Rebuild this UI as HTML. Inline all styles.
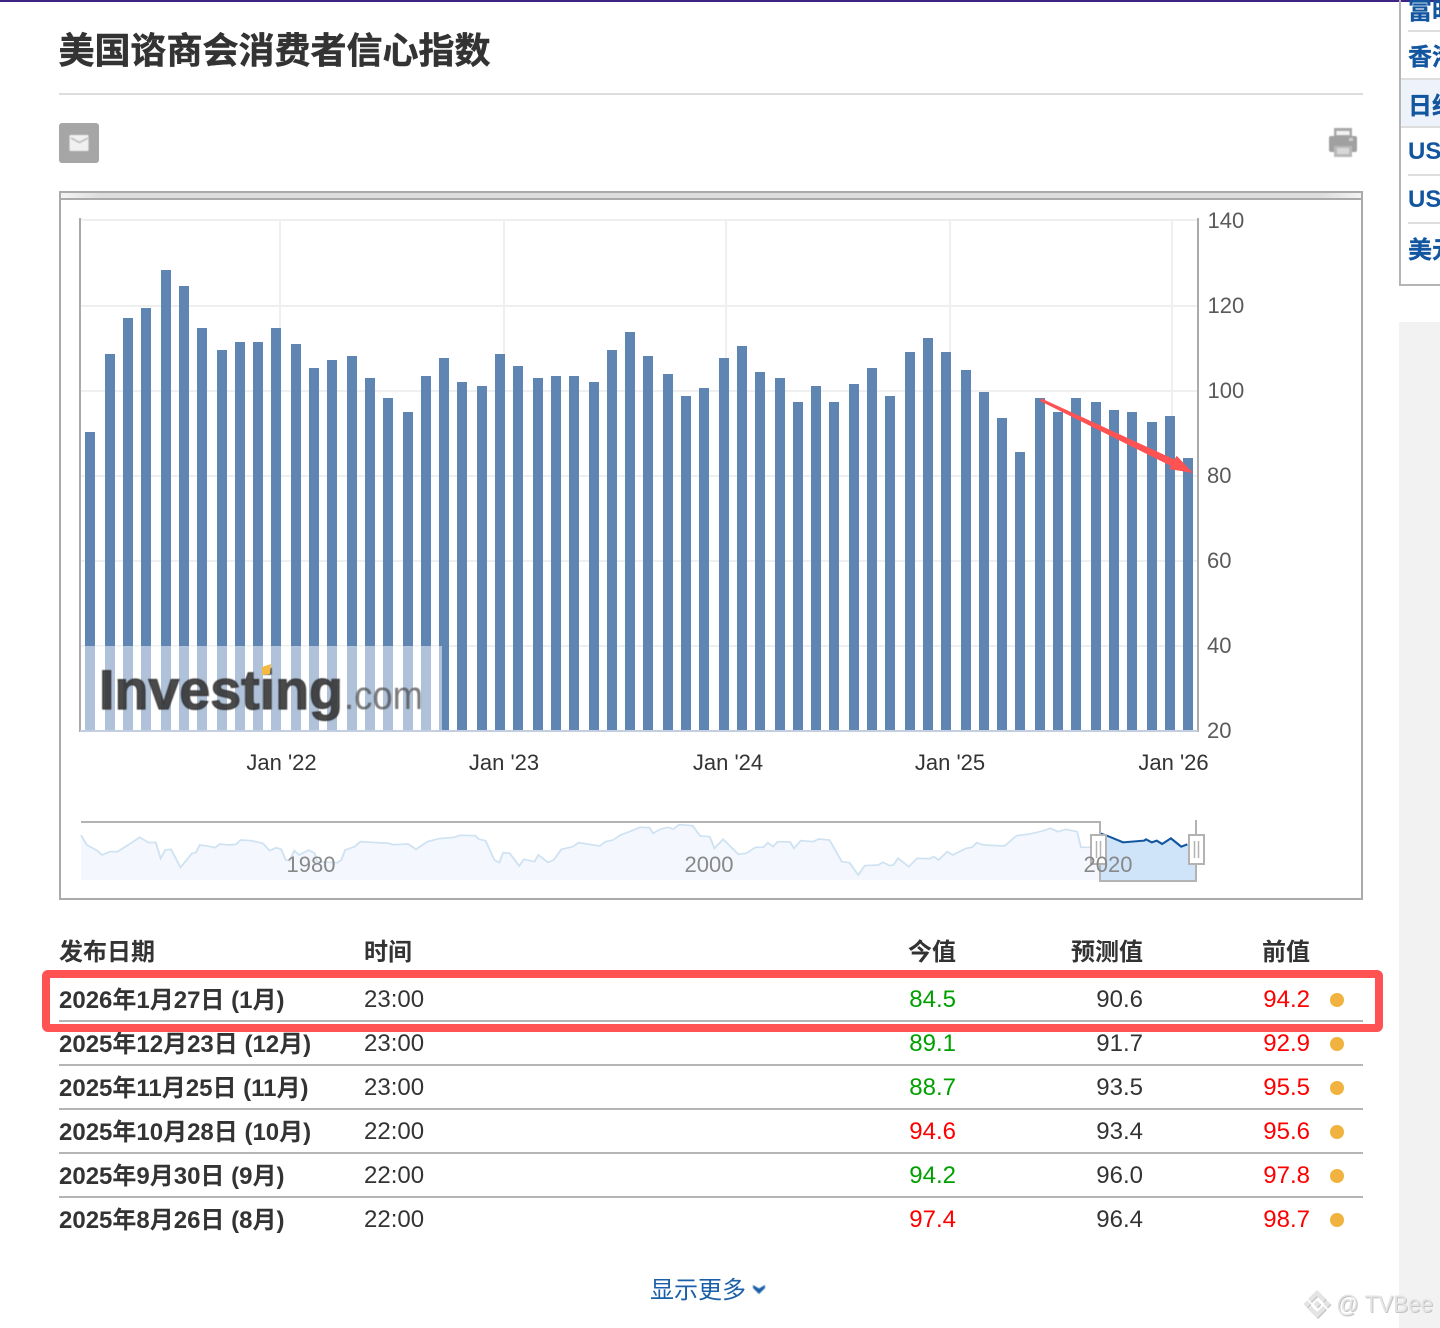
<!DOCTYPE html>
<html lang="zh">
<head>
<meta charset="utf-8">
<title>美国谘商会消费者信心指数</title>
<style>
html,body{margin:0;padding:0;background:#fff;width:1440px;height:1328px;overflow:hidden}
svg{display:block}
text{font-family:"Liberation Sans","Noto Sans CJK SC",sans-serif}
.b{font-weight:700;fill:#333;font-size:24px}
.n{fill:#333;font-size:24px}
.g{fill:#00a000;font-size:24px;text-anchor:end}
.r{fill:#f00;font-size:24px;text-anchor:end}
.e{fill:#333;font-size:24px;text-anchor:end}
.y{fill:#5a5a5a;font-size:22px}
.x{fill:#333;font-size:22px;text-anchor:middle}
.s{fill:#1256a0;font-size:24px;font-weight:700}
.nl{fill:#888;font-size:22px;text-anchor:middle}
</style>
</head>
<body>
<svg width="1440" height="1328" viewBox="0 0 1440 1328" xmlns="http://www.w3.org/2000/svg">
<defs>
<linearGradient id="tg" x1="0" x2="1" y1="0" y2="0"><stop offset="0" stop-color="#f4f4f4"/><stop offset=".03" stop-color="#ddd"/><stop offset=".97" stop-color="#ddd"/><stop offset="1" stop-color="#f4f4f4"/></linearGradient>
<clipPath id="sc"><rect x="1399" y="0" width="41" height="288"/></clipPath>
<filter id="bl" x="-20%" y="-20%" width="140%" height="140%"><feGaussianBlur stdDeviation=".6"/></filter>
<filter id="bl2" x="-5%" y="-10%" width="110%" height="120%"><feGaussianBlur stdDeviation=".4"/></filter>
</defs>
<rect width="1440" height="1328" fill="#fff"/>
<rect x="1399" y="322" width="41" height="1006" fill="#f2f2f2"/>
<rect width="1440" height="2" fill="#3f2382"/>

<!-- sidebar -->
<g clip-path="url(#sc)">
<rect x="1401" y="79" width="39" height="48" fill="#eef3fb"/>
<path d="M1400 0V285H1440" fill="none" stroke="#b5b5b5" stroke-width="2"/>
<path d="M1408 31H1440M1401 79H1440M1401 127H1440M1408 175H1440M1408 223H1440" stroke="#ddd" stroke-width="2" fill="none"/>
<text class="s" x="1408" y="19" stroke="#1256a0" stroke-width=".3">富时</text>
<text class="s" x="1408" y="65" stroke="#1256a0" stroke-width=".3">香港</text>
<text class="s" x="1408" y="114" stroke="#1256a0" stroke-width=".3">日经</text>
<text class="s" x="1408" y="159">USD</text>
<text class="s" x="1408" y="207">USD</text>
<text class="s" x="1408" y="258" stroke="#1256a0" stroke-width=".3">美元</text>
</g>

<!-- title -->
<text x="58.500" y="63" font-size="36" font-weight="700" fill="#333" stroke="#333" stroke-width=".5">美国谘商会消费者信心指数</text>
<rect x="59" y="93" width="1304" height="2" fill="#ddd"/>

<!-- mail icon -->
<rect x="59" y="123" width="40" height="40" rx="3" fill="#a6a6a6"/>
<g filter="url(#bl)">
<rect x="69.500" y="135" width="19" height="16" rx="1" fill="#f0f0f0"/>
<path d="M71 138L79.500 142.500L88 138" fill="none" stroke="#b5b5b5" stroke-width="1.500"/>
</g>

<!-- printer icon -->
<g filter="url(#bl)">
<path d="M1334 128h18v8h-18z" fill="#a8a8a8"/>
<rect x="1336.500" y="131" width="13" height="4" fill="#f2f2f2"/>
<path d="M1331 136h24a2 2 0 0 1 2 2v12a2 2 0 0 1-2 2h-24a2 2 0 0 1-2-2v-12a2 2 0 0 1 2-2z" fill="#a0a0a0"/>
<rect x="1334" y="146" width="18" height="11" fill="#b8b8b8"/>
<rect x="1337" y="148" width="12" height="6" fill="#d8d8d8"/>
<rect x="1349" y="138" width="4" height="3" fill="#ccc"/>
</g>

<!-- chart frame -->
<rect x="60" y="192" width="1302" height="707" fill="#fff" stroke="#aaa" stroke-width="2"/>
<rect x="61" y="193" width="1300" height="5" fill="url(#tg)"/>
<rect x="60" y="198" width="1302" height="2" fill="#aaa"/>

<!-- grid -->
<g stroke="#efefef" stroke-width="2" fill="none">
<path d="M81 220H1198M81 306H1198M81 391H1198M81 476H1198M81 561H1198M81 646H1198"/>
<path d="M280 220V730M504 220V730M726 220V730M950 220V730M1172 220V730"/>
</g>

<!-- bars -->
<path fill="#5f85b2" d="M85 432h10v298h-10zM105 354h10v376h-10zM123 318h10v412h-10zM141 308h10v422h-10zM161 270h10v460h-10zM179 286h10v444h-10zM197 328h10v402h-10zM217 350h10v380h-10zM235 342h10v388h-10zM253 342h10v388h-10zM271 328h10v402h-10zM291 344h10v386h-10zM309 368h10v362h-10zM327 360h10v370h-10zM347 356h10v374h-10zM365 378h10v352h-10zM383 398h10v332h-10zM403 412h10v318h-10zM421 376h10v354h-10zM439 358h10v372h-10zM457 382h10v348h-10zM477 386h10v344h-10zM495 354h10v376h-10zM513 366h10v364h-10zM533 378h10v352h-10zM551 376h10v354h-10zM569 376h10v354h-10zM589 382h10v348h-10zM607 350h10v380h-10zM625 332h10v398h-10zM643 356h10v374h-10zM663 374h10v356h-10zM681 396h10v334h-10zM699 388h10v342h-10zM719 358h10v372h-10zM737 346h10v384h-10zM755 372h10v358h-10zM775 378h10v352h-10zM793 402h10v328h-10zM811 386h10v344h-10zM829 402h10v328h-10zM849 384h10v346h-10zM867 368h10v362h-10zM885 396h10v334h-10zM905 352h10v378h-10zM923 338h10v392h-10zM941 352h10v378h-10zM961 370h10v360h-10zM979 392h10v338h-10zM997 418h10v312h-10zM1015 452h10v278h-10zM1035 398h10v332h-10zM1053 412h10v318h-10zM1071 398h10v332h-10zM1091 402h10v328h-10zM1109 410h10v320h-10zM1127 412h10v318h-10zM1147 422h10v308h-10zM1165 416h10v314h-10zM1183 458h10v272h-10z"/>

<!-- axes -->
<rect x="79" y="218" width="2" height="514" fill="#aaa"/>
<rect x="1197" y="218" width="2" height="514" fill="#aaa"/>
<rect x="80" y="730" width="1118" height="2" fill="#c3cfe0"/>

<!-- watermark -->
<rect x="84" y="646" width="358" height="84" fill="#fff" fill-opacity=".5"/>
<g filter="url(#bl2)">
<text x="99" y="709" font-size="56" font-weight="700" fill="#333" stroke="#333" stroke-width="1.200" fill-opacity=".88" stroke-opacity=".88" textLength="244" lengthAdjust="spacingAndGlyphs">Investing</text>
<text x="344" y="709" font-size="40" fill="#444" fill-opacity=".7" textLength="79" lengthAdjust="spacingAndGlyphs">.com</text>
</g>
<path d="M262 667l9-3-1 10-8 1z" fill="#f5b942"/>

<!-- y labels -->
<text class="y" x="1207.500" y="228">140</text>
<text class="y" x="1207.500" y="313">120</text>
<text class="y" x="1207.500" y="398">100</text>
<text class="y" x="1207" y="483">80</text>
<text class="y" x="1207" y="568">60</text>
<text class="y" x="1207" y="653">40</text>
<text class="y" x="1207" y="738">20</text>

<!-- x labels -->
<text class="x" x="281.500" y="770">Jan '22</text>
<text class="x" x="504" y="770">Jan '23</text>
<text class="x" x="728" y="770">Jan '24</text>
<text class="x" x="950" y="770">Jan '25</text>
<text class="x" x="1173.500" y="770">Jan '26</text>

<!-- arrow -->
<path d="M1040 401L1041.500 398.500L1174.500 459.500L1176.700 455.700L1193 473L1169 469L1171 466z" fill="#ff5252"/>

<!-- navigator -->
<g transform="translate(60,810) scale(.3827,.3333)">
<path fill="#f4f8fe" d="M55 75L70 105L95 120L110 135L130 125L150 125L185 100L208 82L232 98L250 97L263 145L275 120L290 118L315 172L345 130L355 128L365 105L385 108L405 113L418 102L440 105L460 103L472 90L500 92L530 100L548 122L565 113L578 118L590 150L600 152L612 122L625 135L650 120L665 130L672 155L725 158L735 150L745 120L770 110L785 95L860 100L870 104L910 102L930 118L960 95L990 86L1030 82L1045 76L1085 77L1095 88L1112 92L1135 150L1148 158L1158 128L1175 130L1200 168L1212 148L1240 155L1250 135L1275 157L1290 150L1310 118L1340 110L1355 98L1410 108L1425 95L1445 90L1465 75L1490 64L1515 52L1540 53L1550 70L1568 58V210H55z"/>
<path fill="none" stroke="#cfe2f2" stroke-width="5" d="M55 75L70 105L95 120L110 135L130 125L150 125L185 100L208 82L232 98L250 97L263 145L275 120L290 118L315 172L345 130L355 128L365 105L385 108L405 113L418 102L440 105L460 103L472 90L500 92L530 100L548 122L565 113L578 118L590 150L600 152L612 122L625 135L650 120L665 130L672 155L725 158L735 150L745 120L770 110L785 95L860 100L870 104L910 102L930 118L960 95L990 86L1030 82L1045 76L1085 77L1095 88L1112 92L1135 150L1148 158L1158 128L1175 130L1200 168L1212 148L1240 155L1250 135L1275 157L1290 150L1310 118L1340 110L1355 98L1410 108L1425 95L1445 90L1465 75L1490 64L1515 52L1540 53L1550 70L1568 58"/>
</g>
<g transform="translate(660,810) scale(.3827,.3333)">
<path fill="#f4f8fe" d="M0 58L20 52L35 57L50 44L85 47L105 78L130 80L142 115L165 88L205 133L225 130L250 112L270 112L282 98L295 110L308 95L340 96L350 115L368 92L400 95L415 87L443 90L475 155L495 158L518 195L535 167L570 165L583 157L600 167L610 165L622 145L650 170L672 145L705 146L715 140L728 150L750 125L765 135L800 115L815 112L828 98L845 105L900 108L932 77L965 72L1000 63L1020 55L1040 65L1060 58L1090 65L1100 112L1120 112L1150 70V210H0z"/>
<path fill="none" stroke="#cfe2f2" stroke-width="5" d="M0 58L20 52L35 57L50 44L85 47L105 78L130 80L142 115L165 88L205 133L225 130L250 112L270 112L282 98L295 110L308 95L340 96L350 115L368 92L400 95L415 87L443 90L475 155L495 158L518 195L535 167L570 165L583 157L600 167L610 165L622 145L650 170L672 145L705 146L715 140L728 150L750 125L765 135L800 115L815 112L828 98L845 105L900 108L932 77L965 72L1000 63L1020 55L1040 65L1060 58L1090 65L1100 112L1120 112L1130 108"/>
<path fill="#cfe3f9" d="M1150 70L1170 78L1210 97L1265 92L1270 88L1285 97L1298 92L1312 102L1335 85L1362 110L1378 103L1398 100V210H1150z"/>
<path fill="none" stroke="#1256a0" stroke-width="6" d="M1150 70L1170 78L1210 97L1265 92L1270 88L1285 97L1298 92L1312 102L1335 85L1362 110L1378 103"/>
</g>
<path d="M81 822H1100V881H1196V820" fill="none" stroke="#b3b3b3" stroke-width="2"/>
<g fill="#fff" stroke="#b3b3b3" stroke-width="2">
<rect x="1091" y="835" width="15" height="29"/>
<rect x="1189" y="835" width="15" height="29"/>
</g>
<path d="M1096.500 841V858M1100.500 841V858M1194.500 841V858M1198.500 841V858" stroke="#b3b3b3" stroke-width="1.500" fill="none"/>
<text class="nl" x="311" y="872">1980</text>
<text class="nl" x="709" y="872">2000</text>
<text class="nl" x="1108" y="872">2020</text>

<!-- table header -->
<text class="b" x="59" y="960">发布日期</text>
<text class="b" x="364" y="960">时间</text>
<text class="b" x="956" y="960" text-anchor="end">今值</text>
<text class="b" x="1143" y="960" text-anchor="end">预测值</text>
<text class="b" x="1310" y="960" text-anchor="end">前值</text>

<!-- rows -->
<text class="b" x="59" y="1008">2026年1月27日 (1月)</text>
<text class="n" x="364" y="1007">23:00</text>
<text class="g" x="956" y="1007">84.5</text>
<text class="e" x="1143" y="1007">90.6</text>
<text class="r" x="1310" y="1007">94.2</text>
<circle cx="1337" cy="1000" r="7" fill="#f0b33f"/>
<rect x="59" y="1020" width="1304" height="2" fill="#b5b5b5"/>

<text class="b" x="59" y="1052">2025年12月23日 (12月)</text>
<text class="n" x="364" y="1051">23:00</text>
<text class="g" x="956" y="1051">89.1</text>
<text class="e" x="1143" y="1051">91.7</text>
<text class="r" x="1310" y="1051">92.9</text>
<circle cx="1337" cy="1044" r="7" fill="#f0b33f"/>
<rect x="59" y="1064" width="1304" height="2" fill="#b5b5b5"/>

<text class="b" x="59" y="1096">2025年11月25日 (11月)</text>
<text class="n" x="364" y="1095">23:00</text>
<text class="g" x="956" y="1095">88.7</text>
<text class="e" x="1143" y="1095">93.5</text>
<text class="r" x="1310" y="1095">95.5</text>
<circle cx="1337" cy="1088" r="7" fill="#f0b33f"/>
<rect x="59" y="1108" width="1304" height="2" fill="#b5b5b5"/>

<text class="b" x="59" y="1140">2025年10月28日 (10月)</text>
<text class="n" x="364" y="1139">22:00</text>
<text class="r" x="956" y="1139">94.6</text>
<text class="e" x="1143" y="1139">93.4</text>
<text class="r" x="1310" y="1139">95.6</text>
<circle cx="1337" cy="1132" r="7" fill="#f0b33f"/>
<rect x="59" y="1152" width="1304" height="2" fill="#b5b5b5"/>

<text class="b" x="59" y="1184">2025年9月30日 (9月)</text>
<text class="n" x="364" y="1183">22:00</text>
<text class="g" x="956" y="1183">94.2</text>
<text class="e" x="1143" y="1183">96.0</text>
<text class="r" x="1310" y="1183">97.8</text>
<circle cx="1337" cy="1176" r="7" fill="#f0b33f"/>
<rect x="59" y="1196" width="1304" height="2" fill="#b5b5b5"/>

<text class="b" x="59" y="1228">2025年8月26日 (8月)</text>
<text class="n" x="364" y="1227">22:00</text>
<text class="r" x="956" y="1227">97.4</text>
<text class="e" x="1143" y="1227">96.4</text>
<text class="r" x="1310" y="1227">98.7</text>
<circle cx="1337" cy="1220" r="7" fill="#f0b33f"/>

<!-- highlight box -->
<rect x="46" y="974" width="1333" height="54" rx="2" fill="none" stroke="#ff5252" stroke-width="8"/>

<!-- show more -->
<text x="650" y="1298" font-size="24" fill="#1a5fa8">显示更多</text>
<path d="M753 1285l6 3.500 6-3.500v3l-6 6-6-6z" fill="#1a5fa8" filter="url(#bl2)"/>

<!-- TVBee watermark -->
<g fill="#e4e4e4" style="filter:drop-shadow(1px 1px 0 #c4c4c4)">
<path d="M1317 1290l9 9-3 3-6-6-6 6-3-3z"/>
<path d="M1317 1318l9-9-3-3-6 6-6-6-3 3z"/>
<path d="M1307 1300.500l3.500 3.500-3.500 3.500-3.500-3.500z"/>
<path d="M1327 1300.500l3.500 3.500-3.500 3.500-3.500-3.500z"/>
<path d="M1317 1300.500l3.500 3.500-3.500 3.500-3.500-3.500z"/>
<text x="1336" y="1312" font-size="24" textLength="97" lengthAdjust="spacingAndGlyphs" style="font-family:'Liberation Sans','Noto Sans CJK SC',sans-serif">@ TVBee</text>
</g>
</svg>
</body>
</html>
